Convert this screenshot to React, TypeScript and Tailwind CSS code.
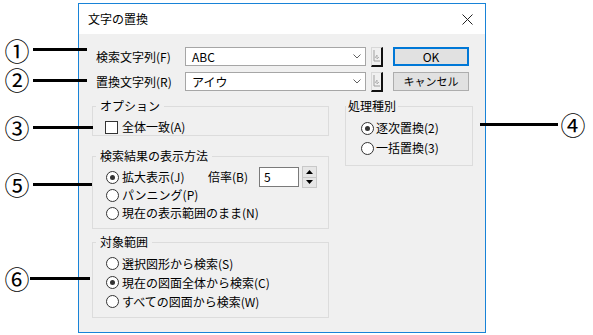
import React from "react";

const Radio = ({ on = false }: { on?: boolean }) => (
  <span className="w-[13px] h-[13px] rounded-full border border-[#333333] bg-white flex items-center justify-center shrink-0">
    {on && <span className="w-[5px] h-[5px] rounded-full bg-[#333333]" />}
  </span>
);

const Chevron = () => (
  <svg width="8" height="5" viewBox="0 0 8 5" className="shrink-0">
    <path d="M0.5 0.5 L4 4 L7.5 0.5" fill="none" stroke="#606060" strokeWidth="1" />
  </svg>
);

const SmallBtn = () => (
  <div className="ml-[5px] w-[12px] h-[20px] border-l border-t border-l-[#d8d8d8] border-t-[#d8d8d8] border-r-2 border-b-2 border-r-[#111111] border-b-[#111111] bg-[#f0f0f0] flex items-center justify-center">
    <svg width="8" height="14" viewBox="0 0 8 14">
      <path d="M1 1 V12 H7" fill="none" stroke="#a0a0a0" strokeWidth="1" />
      <path d="M2 9 L4 6 L4 10 L6 8" fill="none" stroke="#b0b0b0" strokeWidth="1" />
    </svg>
  </div>
);

const Combo = ({ value }: { value: string }) => (
  <div className="w-[181px] h-[19px] border border-[#a6a6a6] bg-white flex items-center pl-[6px] pr-[4px]">
    <span className="flex-1 leading-none">{value}</span>
    <Chevron />
  </div>
);

const Callout = ({ ch, cx, cy }: { ch: string; cx: number; cy: number }) => (
  <span
    className="absolute w-[24px] h-[22px] flex items-center justify-center text-[25px] leading-[22px] text-black"
    style={{ left: cx - 12, top: cy - 11 }}
  >
    {ch}
  </span>
);

const Line = ({ x1, x2, y }: { x1: number; x2: number; y: number }) => (
  <div className="absolute h-[3px] bg-black" style={{ left: x1, top: y - 1, width: x2 - x1 }} />
);

export default function App() {
  return (
    <div className="relative w-[593px] h-[335px] bg-white overflow-hidden font-['Noto_Sans_CJK_JP',sans-serif] text-[12px] text-black">
      <div className="pl-[78px] pt-[3px]">
        <div className="w-[408px] h-[330px] border border-[#1883d7] flex flex-col">
          <div className="h-[30px] bg-white flex items-center justify-between pl-[9px] pr-[12px]">
            <span className="text-[12px] leading-none">文字の置換</span>
            <svg width="11" height="11" viewBox="0 0 11 11">
              <path d="M0.5 0.5 L10.5 10.5 M10.5 0.5 L0.5 10.5" stroke="#222" strokeWidth="1" />
            </svg>
          </div>
          <div className="flex-1 bg-[#f0f0f0] pl-[13px] pt-[13px]">
            <div className="flex h-[19px] items-center">
              <span className="w-[93px] pl-[4px]">検索文字列(F)</span>
              <Combo value="ABC" />
              <SmallBtn />
              <div className="ml-[10px] w-[76px] h-[19px] border-2 border-[#0078d7] bg-[#e1e1e1] flex items-center justify-center leading-none">
                OK
              </div>
            </div>
            <div className="flex h-[19px] items-center mt-[6px]">
              <span className="w-[93px] pl-[4px]">置換文字列(R)</span>
              <Combo value="アイウ" />
              <SmallBtn />
              <div className="ml-[10px] w-[76px] h-[19px] border border-[#adadad] bg-[#e1e1e1] flex items-center justify-center leading-none text-[11px]">
                キャンセル
              </div>
            </div>
            <div className="flex mt-[7px]">
              <div className="w-[237px] flex flex-col">
                <fieldset className="h-[38px] border border-[#dcdcdc] pl-[3px]">
                  <legend className="px-[4px] leading-[16px]">オプション</legend>
                  <div className="flex items-center h-[16px] mt-[5px] ml-[9px]">
                    <span className="w-[13px] h-[13px] border border-[#333333] bg-white" />
                    <span className="ml-[4px]">全体一致(A)</span>
                  </div>
                </fieldset>
                <fieldset className="mt-[12px] h-[81px] border border-[#dcdcdc] pl-[3px]">
                  <legend className="px-[4px] leading-[16px]">検索結果の表示方法</legend>
                  <div className="mt-[4px] ml-[10px] flex flex-col">
                    <div className="flex items-center h-[18px]">
                      <Radio on />
                      <span className="ml-[3px] w-[86px]">拡大表示(J)</span>
                      <span className="w-[51px]">倍率(B)</span>
                      <div className="w-[40px] h-[20px] border border-[#7a7a7a] bg-white flex items-center pl-[4px]">5</div>
                      <div className="ml-[3px] w-[15px] h-[22px] border border-[#c8c8c8] flex flex-col bg-[#e6e6e6]">
                        <div className="flex-1 flex items-center justify-center border-b border-[#c8c8c8]">
                          <svg width="7" height="4" viewBox="0 0 7 4"><path d="M0 4 L3.5 0 L7 4 Z" fill="#000" /></svg>
                        </div>
                        <div className="flex-1 flex items-center justify-center">
                          <svg width="7" height="4" viewBox="0 0 7 4"><path d="M0 0 L3.5 4 L7 0 Z" fill="#000" /></svg>
                        </div>
                      </div>
                    </div>
                    <div className="flex items-center h-[18px]">
                      <Radio />
                      <span className="ml-[3px]">パンニング(P)</span>
                    </div>
                    <div className="flex items-center h-[18px]">
                      <Radio />
                      <span className="ml-[3px]">現在の表示範囲のまま(N)</span>
                    </div>
                  </div>
                </fieldset>
                <fieldset className="mt-[5px] h-[84px] border border-[#dcdcdc] pl-[3px]">
                  <legend className="px-[4px] leading-[16px]">対象範囲</legend>
                  <div className="mt-[4px] ml-[10px] flex flex-col">
                    <div className="flex items-center h-[19px]">
                      <Radio />
                      <span className="ml-[3px]">選択図形から検索(S)</span>
                    </div>
                    <div className="flex items-center h-[19px]">
                      <Radio on />
                      <span className="ml-[3px]">現在の図面全体から検索(C)</span>
                    </div>
                    <div className="flex items-center h-[19px]">
                      <Radio />
                      <span className="ml-[3px]">すべての図面から検索(W)</span>
                    </div>
                  </div>
                </fieldset>
              </div>
              <div className="ml-[16px] w-[128px]">
                <fieldset className="h-[68px] border border-[#dcdcdc] pl-0">
                  <legend className="px-[2px] leading-[16px]">処理種別</legend>
                  <div className="mt-[4px] ml-[15px] flex flex-col">
                    <div className="flex items-center h-[20px]">
                      <Radio on />
                      <span className="ml-[2px]">逐次置換(2)</span>
                    </div>
                    <div className="flex items-center h-[20px]">
                      <Radio />
                      <span className="ml-[2px]">一括置換(3)</span>
                    </div>
                  </div>
                </fieldset>
              </div>
            </div>
          </div>
        </div>
      </div>

      <Line x1={33} x2={87} y={49} />
      <Line x1={33} x2={87} y={80} />
      <Line x1={33} x2={93} y={127} />
      <Line x1={480} x2={558} y={124} />
      <Line x1={33} x2={92} y={184} />
      <Line x1={30} x2={90} y={278} />
      <Callout ch="①" cx={17} cy={50} />
      <Callout ch="②" cx={17} cy={79} />
      <Callout ch="③" cx={17} cy={127} />
      <Callout ch="④" cx={573} cy={124} />
      <Callout ch="⑤" cx={17} cy={184} />
      <Callout ch="⑥" cx={17} cy={278} />
    </div>
  );
}
